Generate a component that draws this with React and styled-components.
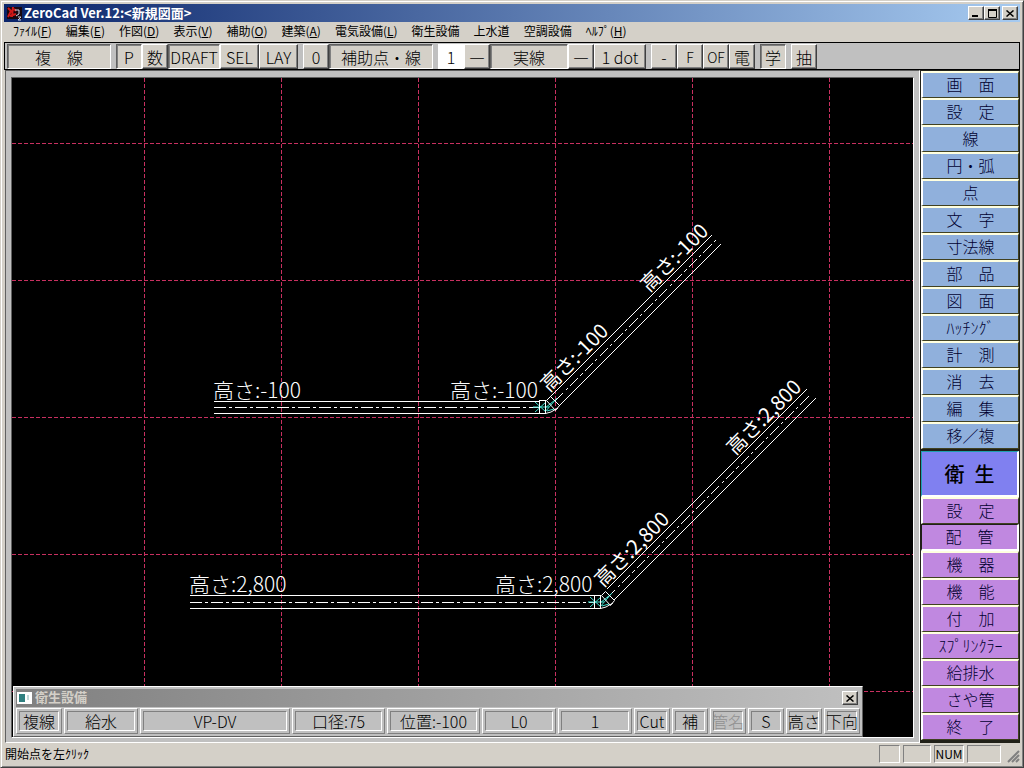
import React from "react";
import styled, { createGlobalStyle, css } from "styled-components";

const GlobalStyle = createGlobalStyle`
  * { box-sizing: border-box; }
  body {
    margin: 0;
    background: #d4d0c8;
    font-family: "Noto Sans CJK JP", "Liberation Sans", sans-serif;
    font-weight: 300;
    color: #000;
  }
  button, input { font: inherit; color: inherit; margin: 0; padding: 0; border-radius: 0; }
`;

const raised = css`
  border: 1px solid;
  border-color: #fff #404040 #404040 #fff;
  box-shadow: inset -1px -1px 0 #808080;
`;

const sunken = css`
  border: 1px solid;
  border-color: #606060 #fff #fff #606060;
  box-shadow: inset 1px 1px 0 #808080;
`;

const Window = styled.div`
  display: flex;
  flex-direction: column;
  min-height: 100vh;
  padding: 3px 3px 2px;
  background: #d4d0c8;
  border: 1px solid;
  border-color: #d4d0c8 #404040 #404040 #d4d0c8;
  box-shadow: inset 1px 1px 0 #fff, inset -1px -1px 0 #808080;
`;

const TitleBar = styled.header`
  display: flex;
  align-items: center;
  height: 18px;
  padding: 0 2px 0 3px;
  background: linear-gradient(90deg, #0a246a, #a6caf0);
`;

const TitleText = styled.h1`
  flex: 1;
  margin: 0 0 0 2px;
  font-size: 13px;
  line-height: 18px;
  font-weight: 700;
  color: #fff;
  white-space: nowrap;
`;

const CaptionButton = styled.button`
  display: flex;
  align-items: center;
  justify-content: center;
  width: 16px;
  height: 14px;
  background: #d4d0c8;
  margin-left: ${(p) => (p.$apart ? "2px" : "0")};
  ${raised}
`;

const MenuBar = styled.nav`
  display: flex;
  height: 20px;
  padding-left: 2px;
`;

const MenuItem = styled.button`
  padding: 0 7px 2px;
  border: 0;
  background: none;
  font-size: 12px;
  line-height: 16px;
  font-weight: 400;
  white-space: nowrap;
`;

const ToolBar = styled.div`
  display: flex;
  gap: 5px;
  height: 28px;
  padding: 1px 2px 0;
  background: #c0c0c0;
  border: 1px solid #000;
`;

const ToolGroup = styled.div`
  display: flex;
`;

const ToolButton = styled.button`
  width: ${(p) => p.$w || 26}px;
  height: 25px;
  background: #d4d0c8;
  font-size: ${(p) => (p.$small ? 14 : 16)}px;
  font-weight: ${(p) => (p.$strong ? 500 : 300)};
  line-height: 20px;
  white-space: pre;
  ${(p) => (p["aria-pressed"] ? sunken : raised)}
`;

const ToolInput = styled.input`
  width: 26px;
  height: 25px;
  border: 1px solid #fff;
  background: #fff;
  text-align: center;
  font-size: 16px;
`;

const Main = styled.main`
  display: flex;
  flex: 1;
`;

const CanvasFrame = styled.div`
  display: flex;
  flex: 1;
  margin-left: 1px;
  padding: 6px 5px 4px;
  background: #c0c0c0;
  border: 1px solid;
  border-color: #606060 #fff #fff #606060;
`;

const Canvas = styled.div`
  position: relative;
  flex: 1;
  background: #000;
  border: 1px solid;
  border-color: #606060 #fff #fff #606060;
  overflow: hidden;
`;

const Drawing = styled.svg`
  position: absolute;
  inset: 0;
  width: 100%;
  height: 100%;
  text { fill: #fff; }
`;

const Palette = styled.section`
  position: absolute;
  left: 1px;
  bottom: 0;
  width: 850px;
  padding: 2px;
  background: #c0c0c0;
  border: 1px solid;
  border-color: #fff #606060 #606060 #fff;
`;

const PaletteTitle = styled.div`
  display: flex;
  align-items: center;
  gap: 3px;
  height: 18px;
  padding: 0 2px 0 1px;
  background: linear-gradient(90deg, #808080, #c0c0c0);
`;

const PaletteName = styled.h2`
  flex: 1;
  margin: 0;
  font-size: 13px;
  line-height: 16px;
  padding-bottom: 2px;
  font-weight: 700;
  color: #d4d0c8;
`;

const PaletteRow = styled.div`
  display: flex;
  gap: 2px;
  padding-top: 1px;
`;

const PaletteButton = styled.button`
  width: ${(p) => p.$w || 36}px;
  height: 26px;
  padding: 2px;
  background: #c0c0c0;
  border: 1px solid;
  border-color: #fff #808080 #808080 #fff;
  font-size: 16px;
  line-height: 18px;
  white-space: nowrap;
  span {
    display: flex;
    justify-content: center;
    height: 20px;
    border: 1px solid;
    border-color: #808080 #fff #fff #808080;
  }
  &:disabled { color: #909090; }
`;

const SideBar = styled.aside`
  display: flex;
  flex-direction: column;
  width: 100px;
  padding: 1px 1px 0;
  background: #202018;
`;

const SideGroup = styled.div`
  display: flex;
  flex-direction: column;
  &:last-child { margin-top: 2px; }
`;

const SideButton = styled.button`
  height: 27px;
  padding-bottom: 2px;
  border: 1px solid;
  border-width: 2px 1px 1px 2px;
  border-color: #ffffe0 #404020 #404020 #fff;
  background: ${(p) => (p.$tone === "purple" ? "#c088e0" : "#90b0dc")};
  color: #000030;
  font-size: 16px;
  line-height: 22px;
  white-space: pre;
  &[aria-pressed="true"] {
    border-width: 1px 2px 2px 1px;
    border-color: #202018 #fff #fff #202018;
  }
`;

const ModeButton = styled.button`
  height: 46px;
  border: 1px solid;
  border-width: 1px 2px 2px 1px;
  border-color: #20a0b0 #fff #fff #20a0b0;
  background: #8080f0;
  font-size: 20px;
  font-weight: 500;
  white-space: pre;
`;

const StatusBar = styled.footer`
  display: flex;
  align-items: center;
  gap: 3px;
  height: 22px;
  padding-left: 1px;
  font-size: 12px;
  font-weight: 400;
`;

const StatusText = styled.div`
  flex: 1;
  line-height: 20px;
`;

const StatusCell = styled.div`
  width: ${(p) => p.$w}px;
  height: 18px;
  border: 1px solid;
  border-color: #808080 #fff #fff #808080;
  line-height: 16px;
  text-align: center;
`;

const MENUS = [
  ["ﾌｧｲﾙ", "F"], ["編集", "E"], ["作図", "D"], ["表示", "V"], ["補助", "O"], ["建築", "A"],
  ["電気設備", "L"], ["衛生設備"], ["上水道"], ["空調設備"], ["ﾍﾙﾌﾟ", "H"],
];

const TOOLS = [
  [{ t: "複　線", w: 104, on: true }],
  [{ t: "P", on: true }, { t: "数" }, { t: "DRAFT", w: 52, on: true }, { t: "SEL", w: 39 }, { t: "LAY", w: 39 }],
  [{ t: "0" }, { t: "補助点・線", w: 104, on: true }],
  [{ t: "1", input: true }, { t: "―", strong: true }, { t: "実線", w: 78, on: true }, { t: "―", strong: true }, { t: "1 dot", w: 52 }],
  [{ t: "-" }, { t: "F", small: true }, { t: "OF", small: true }, { t: "電" }],
  [{ t: "学", on: true }],
  [{ t: "抽" }],
];

const SIDE_GROUPS = [
  ["画　面", "設　定"],
  ["線", "円・弧", "点", "文　字", "寸法線"],
  ["部　品", "図　面", "ﾊｯﾁﾝｸﾞ", "計　測"],
  ["消　去", "編　集", "移／複"],
];

const PLUMBING = ["設　定", "配　管", "機　器", "機　能", "付　加", "ｽﾌﾟﾘﾝｸﾗｰ", "給排水", "さや管", "終　了"];

const PALETTE = [
  ["複線", 46], ["給水", 74], ["VP-DV", 150], ["口径:75", 93], ["位置:-100", 93], ["L0", 74], ["1", 74],
  ["Cut"], ["補"], ["管名", 36, true], ["S"], ["高さ"], ["下向"],
];

const CENTER_DASH = "12 3 3 3";

function Close() {
  return (
    <svg width="8" height="7" viewBox="0 0 8 7" stroke="#000" strokeWidth="1.5">
      <path d="M0.5 0.5 L7.5 6.5 M7.5 0.5 L0.5 6.5" />
    </svg>
  );
}

function Elbow({ x, y }) {
  return (
    <g transform={`translate(${x} ${y})`} fill="none">
      <g stroke="#40e0d0">
        <path d="M-6 -5 L5 5 M-6 5 L5 -5 M-8 0 H8 M4 5 L16 -9 M4 1 L14 -7 M6 4 L13 2" />
      </g>
      <g stroke="#fff">
        <rect x="-1.5" y="-6.5" width="6" height="13" shapeRendering="crispEdges" />
        <path d="M5.5 -6.5 L9.5 -10.5 L18.5 -1.5 L14.5 3.5 Z M4.5 6.5 L10 5 L17 1" />
      </g>
    </g>
  );
}

function CadDrawing() {
  return (
    <Drawing role="img" aria-label="配管図">
      <g transform="translate(-12 -78)">
        <g stroke="#c83060" strokeDasharray="4 2" shapeRendering="crispEdges">
          {[144, 281, 418, 555, 692, 829].map((x) => (
            <line key={x} x1={x + 0.5} x2={x + 0.5} y1="78" y2="2000" />
          ))}
          {[143, 280, 417, 554, 691].map((y) => (
            <line key={y} x1="12" x2="4000" y1={y + 0.5} y2={y + 0.5} />
          ))}
        </g>
        <g stroke="#fff" fill="none" shapeRendering="crispEdges">
          <path d="M214 401.5 H540 M214 413.5 H540 M190 595.5 H594 M190 608.5 H594" />
          <path d="M214 407.5 H540 M190 602.5 H594" strokeDasharray={CENTER_DASH} />
          <path d="M550 397 L712 235 M559 406 L721 244 M607 589 L807 389 M614 600 L816 398" />
          <path d="M555 401 L717 239 M607 598 L810 395" strokeDasharray={CENTER_DASH} />
        </g>
        <Elbow x={541} y={407} />
        <Elbow x={596} y={602} />
        <g fontWeight="300" fontSize="21">
          <text x="213" y="398">高さ:-100</text>
          <text x="450" y="398">高さ:-100</text>
          <text x="189" y="592">高さ:2,800</text>
          <text x="495" y="592">高さ:2,800</text>
        </g>
        <g fontWeight="400" fontSize="20">
          <text transform="translate(549 393) rotate(-45)">高さ:-100</text>
          <text transform="translate(649 293) rotate(-45)">高さ:-100</text>
          <text transform="translate(603 588) rotate(-45)">高さ:2,800</text>
          <text transform="translate(735 456) rotate(-45)">高さ:2,800</text>
        </g>
      </g>
    </Drawing>
  );
}

export default function App() {
  return (
    <>
      <GlobalStyle />
      <Window>
        <TitleBar>
          <svg width="15" height="16" viewBox="0 0 15 16" fill="none">
            <path d="M0 2h15v12H0z" fill="#180810" />
            <path d="M1 3l3 3-3 6M6 2l-1 10M3 11l6-2M7 4l2 2" stroke="#d01818" strokeWidth="2" />
            <path d="M8 5h4v4l-3 2M11 12h3l-3 3h3" stroke="#c8d4e8" />
          </svg>
          <TitleText>ZeroCad Ver.12:&lt;新規図面&gt;</TitleText>
          <CaptionButton aria-label="最小化">
            <svg width="8" height="7"><rect x="0" y="5" width="6" height="2" /></svg>
          </CaptionButton>
          <CaptionButton aria-label="最大化">
            <svg width="9" height="9" fill="none" stroke="#000">
              <path d="M0.5 1 V8.5 H8.5 V1" /><path d="M0 1 H9" strokeWidth="2" />
            </svg>
          </CaptionButton>
          <CaptionButton $apart aria-label="閉じる"><Close /></CaptionButton>
        </TitleBar>

        <MenuBar>
          {MENUS.map(([name, key]) => (
            <MenuItem key={name}>{name}{key && <>(<u>{key}</u>)</>}</MenuItem>
          ))}
        </MenuBar>

        <ToolBar>
          {TOOLS.map((group, i) => (
            <ToolGroup key={i}>
              {group.map((b, j) =>
                b.input ? (
                  <ToolInput key={j} aria-label="線番号" defaultValue={b.t} />
                ) : (
                  <ToolButton key={j} $w={b.w} $small={b.small} $strong={b.strong} aria-pressed={b.on}>{b.t}</ToolButton>
                )
              )}
            </ToolGroup>
          ))}
        </ToolBar>

        <Main>
          <CanvasFrame>
            <Canvas>
              <CadDrawing />
              <Palette>
                <PaletteTitle>
                  <svg width="15" height="12" viewBox="0 0 15 12">
                    <rect width="15" height="12" fill="#fff" />
                    <rect x="2" y="2" width="6" height="8" fill="#308080" />
                    <path d="M10 3h2v5h-2z" fill="#c0d8d8" />
                  </svg>
                  <PaletteName>衛生設備</PaletteName>
                  <CaptionButton aria-label="閉じる"><Close /></CaptionButton>
                </PaletteTitle>
                <PaletteRow>
                  {PALETTE.map(([label, w, off]) => (
                    <PaletteButton key={label} $w={w} disabled={off}><span>{label}</span></PaletteButton>
                  ))}
                </PaletteRow>
              </Palette>
            </Canvas>
          </CanvasFrame>
          <SideBar>
            {SIDE_GROUPS.map((group, i) => (
              <SideGroup key={i}>
                {group.map((label) => <SideButton key={label}>{label}</SideButton>)}
              </SideGroup>
            ))}
            <SideGroup>
              <ModeButton aria-pressed="true">{"衛\u2002生"}</ModeButton>
              {PLUMBING.map((label) => (
                <SideButton key={label} $tone="purple" aria-pressed={label === "配　管"}>{label}</SideButton>
              ))}
            </SideGroup>
          </SideBar>
        </Main>

        <StatusBar>
          <StatusText>開始点を左ｸﾘｯｸ</StatusText>
          <StatusCell $w={21} />
          <StatusCell $w={28} />
          <StatusCell $w={30}>NUM</StatusCell>
          <StatusCell $w={34} />
          <svg width="16" height="18" stroke="#808080" strokeWidth="2">
            <path d="M4 17 L15 6 M8 17 L15 10 M12 17 L15 14" />
          </svg>
        </StatusBar>
      </Window>
    </>
  );
}
